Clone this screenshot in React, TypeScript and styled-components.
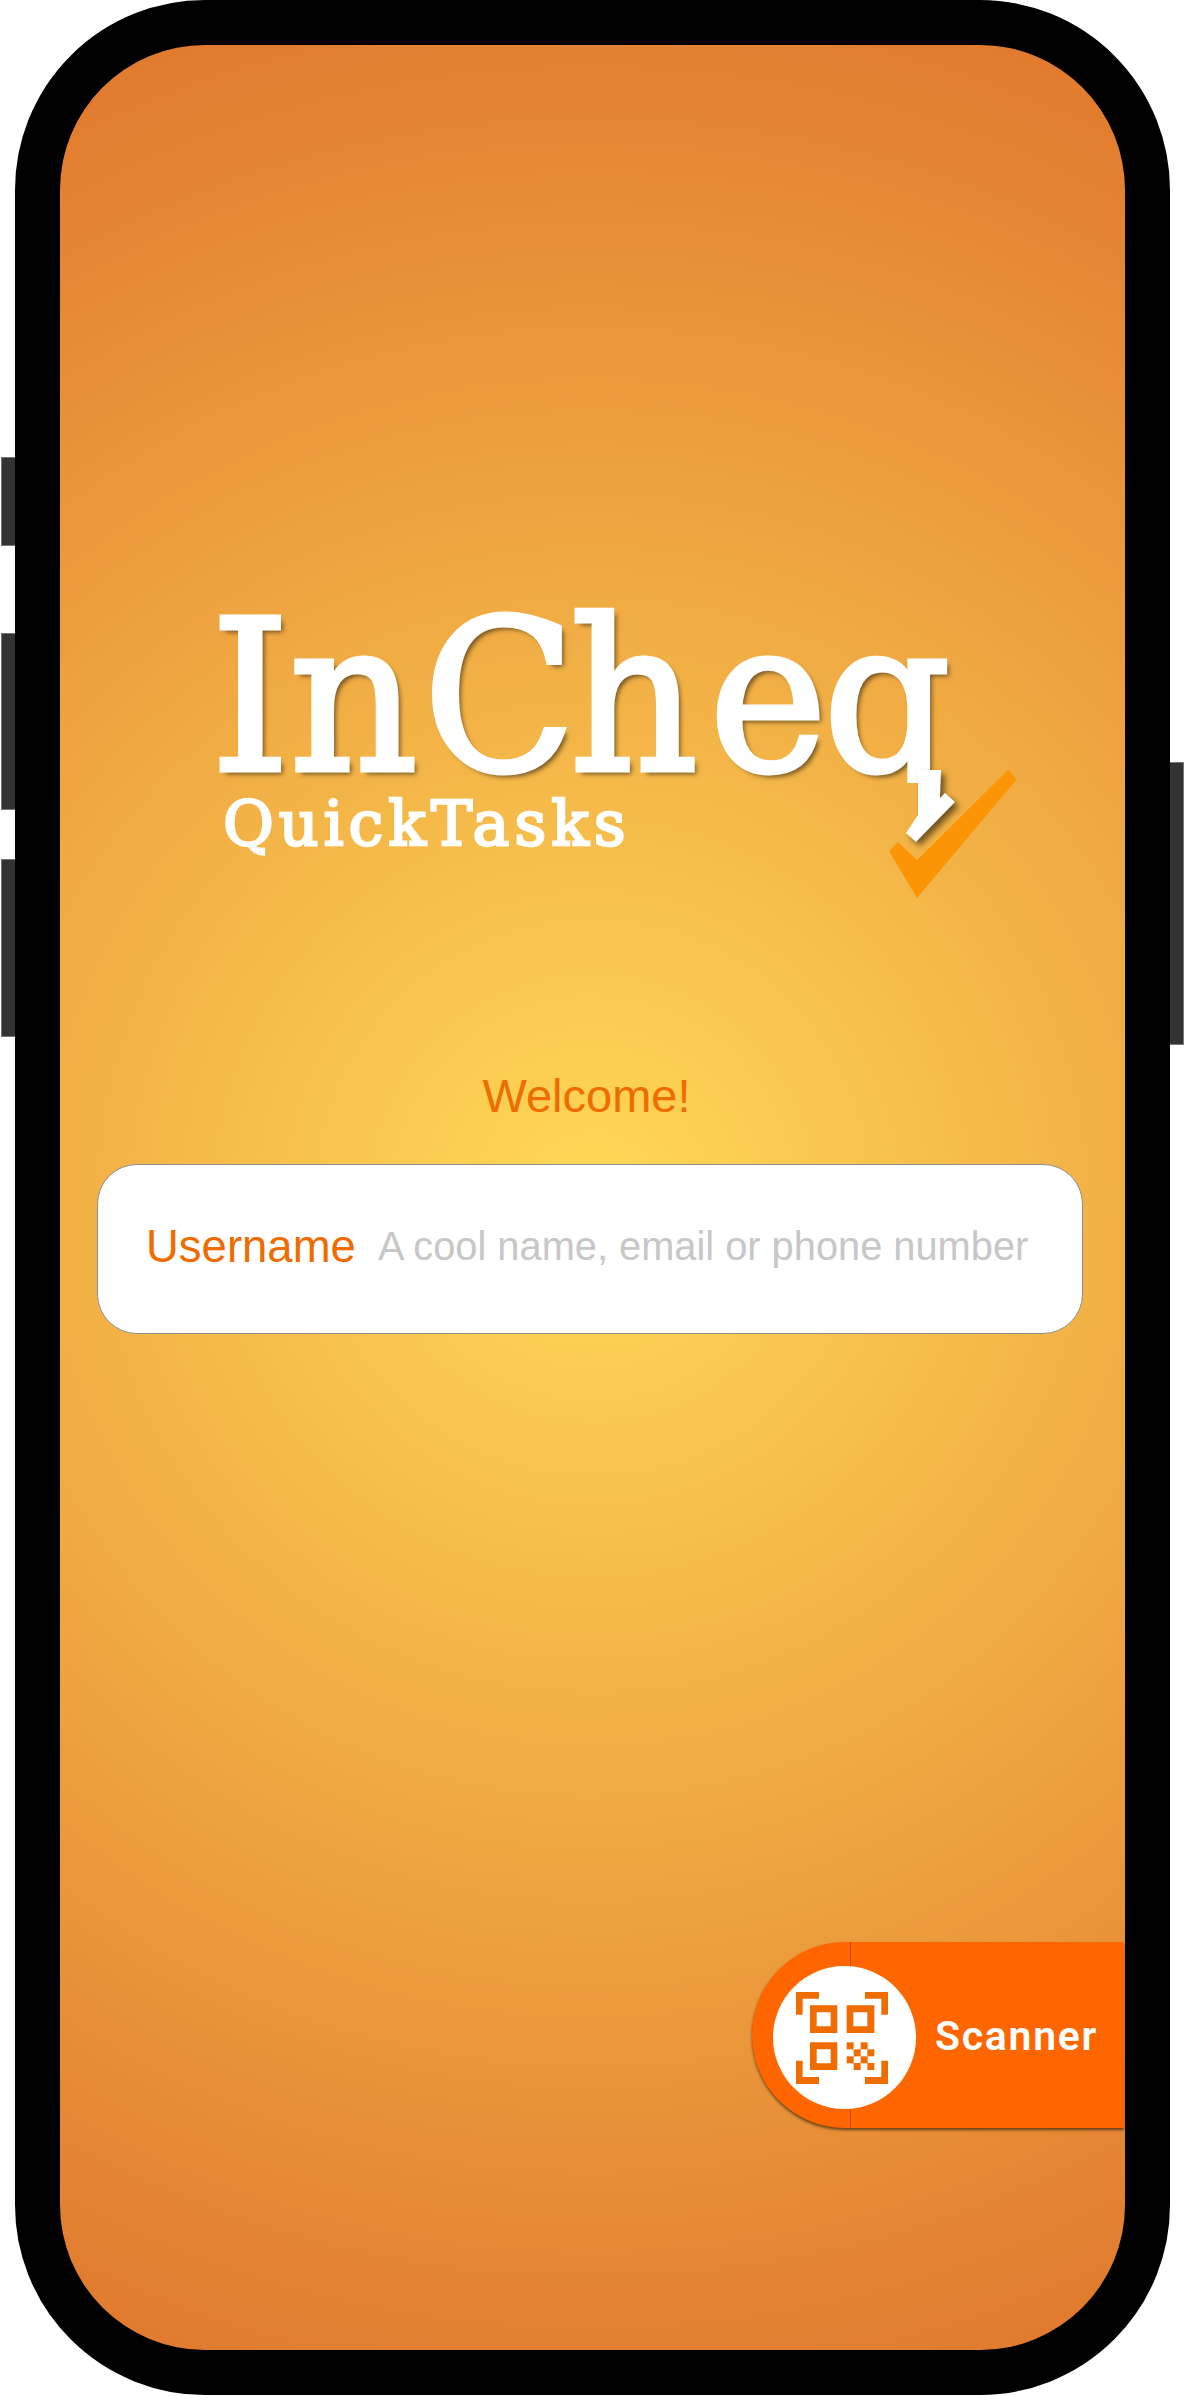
import React from 'react'
import styled, { createGlobalStyle } from 'styled-components'

const GlobalStyle = createGlobalStyle`
  html, body {
    margin: 0;
    padding: 0;
    background: #fff;
  }
`

const CHECKER_CELLS = [
  [200, 243], [242, 243],
  [221, 264], [262, 264],
  [200, 285], [242, 285],
  [221, 305], [262, 305],
]

const QrIcon = () => (
  <svg width="92" height="92" viewBox="48 92 276 276" fill="#ee6c00">
    <polygon points="48,92 117,92 117,112 68,112 68,160 48,160" />
    <polygon points="255,92 324,92 324,160 304,160 304,112 255,112" />
    <polygon points="48,298 68,298 68,347 117,347 117,368 48,368" />
    <polygon points="304,298 324,298 324,368 255,368 255,347 304,347" />
    <path fillRule="evenodd" d="M90 132h82v83H90zM110 153v42h42v-42z" />
    <path fillRule="evenodd" d="M200 132h83v83h-83zM220 153v42h42v-42z" />
    <path fillRule="evenodd" d="M90 243h82v83H90zM110 264v42h42v-42z" />
    {CHECKER_CELLS.map(([x, y]) => (
      <rect key={`${x}-${y}`} x={x} y={y} width="21" height="21" />
    ))}
  </svg>
)

const App = () => {
  return (
    <>
      <GlobalStyle />
      <Page>
        <Phone>
          <SideButton $top={457} $height={89} />
          <SideButton $top={633} $height={177} />
          <SideButton $top={859} $height={178} />
          <PowerButton />
          <Screen>
            <Logo>
              <Word>
                I<Kern $gap={6}>n</Kern>
                <Kern $gap={-6}>C</Kern>
                <Kern $gap={12}>h</Kern>
                <Kern $gap={-4}>e</Kern>q
              </Word>
              <SubWord>QuickTasks</SubWord>
              <LogoMark width="160" height="140" viewBox="880 765 160 140">
                <polygon
                  className="tail"
                  points="918,770 941,770 940,798 945,793 955,802 916,842 906,833 918,815"
                />
                <polygon
                  fill="#fb9505"
                  points="1008,770 1017,779 917,898 889,851 898,842 917,860"
                />
              </LogoMark>
            </Logo>
            <Welcome>Welcome!</Welcome>
            <Field>
              <FieldLabel>Username</FieldLabel>
              <FieldHint>A cool name, email or phone number</FieldHint>
            </Field>
            <ScannerTab>
              <ScannerBadge>
                <QrIcon />
              </ScannerBadge>
              <ScannerLabel>Scanner</ScannerLabel>
            </ScannerTab>
          </Screen>
        </Phone>
      </Page>
    </>
  )
}

export default App

// Styled Components

const Page = styled.div`
  width: 1185px;
  height: 2396px;
  padding-left: 15px;
  box-sizing: border-box;
  overflow: hidden;
`

const Phone = styled.div`
  position: relative;
  width: 1155px;
  height: 2395px;
  box-sizing: border-box;
  border: 45px solid #000;
  border-radius: 190px;
  background: #000;
`

const SideButton = styled.div<{ $top: number; $height: number }>`
  position: absolute;
  left: -59px;
  top: ${(p) => p.$top - 45}px;
  width: 14px;
  height: ${(p) => p.$height}px;
  box-sizing: border-box;
  background: #333;
  border: 1.5px solid #777;
  border-right: none;
`

const PowerButton = styled.div`
  position: absolute;
  right: -59px;
  top: 717px;
  width: 14px;
  height: 283px;
  box-sizing: border-box;
  background: #333;
  border: 1.5px solid #777;
  border-left: none;
`

const Screen = styled.div`
  width: 1065px;
  height: 2305px;
  box-sizing: border-box;
  padding-top: 550px;
  border-radius: 145px;
  display: flex;
  flex-direction: column;
  overflow: hidden;
  background: radial-gradient(circle farthest-corner at 50% 50%, #ffd957 0%, #e0772d 100%);
`

const Logo = styled.div`
  position: relative;
  margin-left: 151px;
  height: 253px;
`

const Word = styled.div`
  height: 205px;
  width: 800px;
  white-space: nowrap;
  font-family: 'DejaVu Serif', serif;
  font-size: 210px;
  line-height: 205px;
  color: #fff;
  -webkit-text-stroke: 5px #fff;
  text-shadow: 4px 4px 5px rgba(0, 0, 0, 0.55);
  transform: scaleX(0.947);
  transform-origin: left center;
  clip-path: inset(-20px -20px 17px -20px);
`

const Kern = styled.span<{ $gap: number }>`
  letter-spacing: ${(p) => p.$gap}px;
`

const SubWord = styled.div`
  margin-left: 12px;
  font-family: 'DejaVu Serif', serif;
  font-size: 62px;
  line-height: 48px;
  letter-spacing: 5px;
  color: #fff;
  -webkit-text-stroke: 2.5px #fff;
`

const LogoMark = styled.svg`
  position: absolute;
  left: 669px;
  top: 170px;

  .tail {
    fill: #fff;
    filter: drop-shadow(4px 4px 3px rgba(0, 0, 0, 0.55));
  }
`

const Welcome = styled.div`
  margin-top: 220px;
  padding-right: 12px;
  text-align: center;
  font-family: 'Liberation Sans', Arial, sans-serif;
  font-size: 47px;
  line-height: 56px;
  color: #ee6c00;
`

const Field = styled.div`
  margin: 40px 0 0 37px;
  width: 986px;
  height: 170px;
  box-sizing: border-box;
  padding: 0 0 5px 48px;
  display: flex;
  align-items: center;
  gap: 22px;
  background: #fff;
  border: 1px solid #8f8f8f;
  border-radius: 40px;
  font-family: 'Liberation Sans', Arial, sans-serif;
`

const FieldLabel = styled.span`
  font-size: 45.5px;
  color: #ee6c00;
`

const FieldHint = styled.span`
  font-size: 39.8px;
  color: #c7c7c7;
`

const ScannerTab = styled.div`
  position: relative;
  margin-top: 608px;
  margin-left: 692px;
  width: 372px;
  height: 186px;
  box-sizing: border-box;
  padding: 5px 0 0 21px;
  display: flex;
  align-items: center;
  gap: 19px;
  background: #ff6600;
  border-radius: 93px 0 0 93px;
  box-shadow: 0 2px 3px rgba(0, 0, 0, 0.55);

  &::before {
    content: '';
    position: absolute;
    left: 98px;
    top: 0;
    bottom: 0;
    width: 1px;
    background: rgba(120, 50, 0, 0.45);
  }
`

const ScannerBadge = styled.div`
  position: relative;
  width: 143px;
  height: 143px;
  flex-shrink: 0;
  border-radius: 50%;
  background: #fff;
  display: flex;
  align-items: center;
  justify-content: center;
  padding-right: 5px;
  box-sizing: border-box;
`

const ScannerLabel = styled.span`
  margin-bottom: 4px;
  font-family: Roboto, sans-serif;
  font-size: 41px;
  font-weight: 600;
  letter-spacing: 1.7px;
  color: #fff;
`
